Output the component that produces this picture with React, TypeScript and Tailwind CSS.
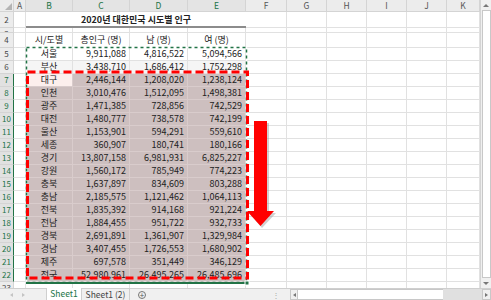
import React from 'react';

// column widths: rowhead, A, B, C, D, E, F..K
const COLS = 'grid grid-cols-[14px_12px_47px_57px_58px_58px_41px_40px_40px_40px_40px_33px]';
const GRID = 'border-r border-b border-[#e1e1e1]';

const rows: string[][] = [
    ['서울', '9,911,088', '4,816,522', '5,094,566'],
    ['부산', '3,438,710', '1,686,412', '1,752,298'],
    ['대구', '2,446,144', '1,208,020', '1,238,124'],
    ['인천', '3,010,476', '1,512,095', '1,498,381'],
    ['광주', '1,471,385', '728,856', '742,529'],
    ['대전', '1,480,777', '738,578', '742,199'],
    ['울산', '1,153,901', '594,291', '559,610'],
    ['세종', '360,907', '180,741', '180,166'],
    ['경기', '13,807,158', '6,981,931', '6,825,227'],
    ['강원', '1,560,172', '785,949', '774,223'],
    ['충북', '1,637,897', '834,609', '803,288'],
    ['충남', '2,185,575', '1,121,462', '1,064,113'],
    ['전북', '1,835,392', '914,168', '921,224'],
    ['전남', '1,884,455', '951,722', '932,733'],
    ['경북', '2,691,891', '1,361,907', '1,329,984'],
    ['경남', '3,407,455', '1,726,553', '1,680,902'],
    ['제주', '697,578', '351,449', '346,129'],
    ['전국', '52,980,961', '26,495,265', '26,485,696'],
];

const RowHead: React.FC<{ n: number; selected?: boolean }> = ({ n, selected }) => (
    <div
        className={`flex items-center justify-center overflow-hidden border-b text-[8px] ${
            selected
                ? 'bg-[#e1e1e1] text-[#217346] border-r-[1.5px] border-r-[#217346] border-b-[#d4d4d4]'
                : 'bg-[#ececec] text-[#444] border-r border-[#d4d4d4]'
        }`}
    >
        {n}
    </div>
);

const Empties = () => (
    <>
        {[0, 1, 2, 3, 4, 5].map(i => (
            <div key={i} className={GRID} />
        ))}
    </>
);

const HeaderRow = () => (
    <div className={`${COLS} h-[12px] bg-[#ececec] text-[8.5px] leading-[11px]`}>
        <div className="relative border-r border-b border-[#d4d4d4]">
            <div className="absolute right-[1px] bottom-[1px] w-0 h-0 border-l-[7px] border-l-transparent border-b-[7px] border-b-[#b4b4b4]" />
        </div>
        {['A', 'B', 'C', 'D', 'E', 'F', 'G', 'H', 'I', 'J', 'K'].map(c => {
            const sel = 'BCDE'.includes(c);
            return (
                <div
                    key={c}
                    className={`text-center border-r border-b border-[#d4d4d4] ${sel ? 'text-[#217346] bg-[#e4e4e4]' : 'text-[#555]'}`}
                >
                    {c}
                </div>
            );
        })}
    </div>
);

export default function App() {
    return (
        <div className="w-[491px] h-[300px] overflow-hidden bg-white font-['Noto_Sans_CJK_KR','Noto_Sans',sans-serif] text-[#222]">
            <div className="flex h-[288px]">
                <div className="relative w-[480px] h-[288px] overflow-hidden">
                    <HeaderRow />

                    {/* row 2: title */}
                    <div className={`${COLS} h-[16px]`}>
                        <RowHead n={2} />
                        <div className={GRID} />
                        <div className="col-span-4 flex items-center justify-center border-b-2 border-[#8c8c8c] text-[9px] font-bold leading-none">
                            2020년 대한민국 시도별 인구
                        </div>
                        <Empties />
                    </div>

                    {/* row 3: squeezed */}
                    <div className={`${COLS} h-[5px]`}>
                        <div className="overflow-hidden bg-[#ececec] border-r border-b border-[#d4d4d4] text-[8px] text-[#444] text-center leading-[12px]">3</div>
                        <div className={GRID} />
                        <div className={GRID} />
                        <div className={GRID} />
                        <div className={GRID} />
                        <div className={GRID} />
                        <Empties />
                    </div>

                    {/* row 4: column headings */}
                    <div className={`${COLS} h-[15px] text-[9px]`}>
                        <RowHead n={4} />
                        <div className={GRID} />
                        <div className={`${GRID} flex items-center justify-center`}>시/도별</div>
                        <div className={`${GRID} flex items-center justify-center`}>총인구 (명)</div>
                        <div className={`${GRID} flex items-center justify-center`}>남 (명)</div>
                        <div className={`${GRID} flex items-center justify-center`}>여 (명)</div>
                        <Empties />
                    </div>

                    {rows.map((r, i) => {
                        const n = i + 5;
                        const sel = n >= 7;
                        const cellBg = sel ? 'bg-[#cdbfbf] border-[#d9cccc]' : n === 6 ? 'bg-[#f5f5f5] border-[#e1e1e1]' : 'border-[#e1e1e1]';
                        return (
                            <div key={n} className={`${COLS} h-[13px] text-[9px] leading-[12px]`}>
                                <RowHead n={n} selected={sel} />
                                <div className={GRID} />
                                <div
                                    className={`border-r border-b text-center ${
                                        n === 7 ? 'bg-[#fcefed] border-[#d9cccc]' : cellBg
                                    }`}
                                >
                                    {r[0]}
                                </div>
                                {r.slice(1).map((v, j) => (
                                    <div key={j} className={`border-r border-b text-right pr-[3px] ${cellBg}`}>
                                        {v}
                                    </div>
                                ))}
                                <Empties />
                            </div>
                        );
                    })}

                    {/* row 23: cut off */}
                    <div className={`${COLS} h-[6px]`}>
                        <div className="overflow-hidden bg-[#ececec] border-r border-[#d4d4d4] text-[8px] text-[#444] text-center leading-[12px]">23</div>
                        <div className="border-r border-[#e1e1e1]" />
                        <div className="border-r border-[#e1e1e1]" />
                        <div className="border-r border-[#e1e1e1]" />
                        <div className="border-r border-[#e1e1e1]" />
                        <div className="border-r border-[#e1e1e1]" />
                        {[0, 1, 2, 3, 4, 5].map(k => (
                            <div key={k} className="border-r border-[#e1e1e1]" />
                        ))}
                    </div>

                    {/* copy marquee, red box, selection edge, arrow */}
                    <svg className="absolute left-0 top-0 pointer-events-none" width="480" height="288">
                        <rect x="26.5" y="47.5" width="220" height="235" fill="none" stroke="#ffffff" strokeWidth="1.5" />
                        <rect x="26.5" y="47.5" width="220" height="235" fill="none" stroke="#217346" strokeWidth="1.5" strokeDasharray="3 3" />
                        <rect x="27.5" y="72" width="220" height="206" fill="none" stroke="#ff0000" strokeWidth="3" strokeDasharray="8 4" />
                        <line x1="26" y1="283" x2="247" y2="283" stroke="#217346" strokeWidth="2" />
                        <rect x="245" y="281" width="4" height="4" fill="#217346" stroke="#ffffff" strokeWidth="1" />
                        <polygon points="256,123 269,123 269,213 276,213 262,228 249,213 256,213" fill="#9a9a9a" opacity="0.45" />
                        <polygon points="254,121 267,121 267,211 274,211 260.5,226 247,211 254,211" fill="#ff0000" />
                    </svg>
                </div>

                {/* vertical scrollbar */}
                <div className="w-[11px] h-[288px] bg-[#f0f0f0] border-l border-[#d4d4d4] flex flex-col items-center">
                    <div className="h-[10px] flex items-center justify-center">
                        <div className="w-0 h-0 border-l-[3px] border-l-transparent border-r-[3px] border-r-transparent border-b-[3px] border-b-[#777]" />
                    </div>
                    <div className="flex-1 w-[9px] bg-white border border-[#c8c8c8]" />
                    <div className="h-[10px] flex items-center justify-center">
                        <div className="w-0 h-0 border-l-[3px] border-l-transparent border-r-[3px] border-r-transparent border-t-[3px] border-t-[#777]" />
                    </div>
                </div>
            </div>

            {/* sheet tabs + horizontal scrollbar */}
            <div className="h-[12px] flex items-stretch bg-[#f0f0f0] border-t border-[#cfcfcf] text-[8.5px] leading-[11px]">
                <div className="w-[46px] flex items-center gap-[9px] pl-[10px]">
                    <div className="w-0 h-0 border-t-[2.5px] border-t-transparent border-b-[2.5px] border-b-transparent border-r-[3px] border-r-[#c4c4c4]" />
                    <div className="w-0 h-0 border-t-[2.5px] border-t-transparent border-b-[2.5px] border-b-transparent border-l-[3px] border-l-[#c4c4c4]" />
                </div>
                <div className="w-[36px] bg-white text-[#217346] text-center border-x border-[#cfcfcf] -mt-px">Sheet1</div>
                <div className="w-[48px] text-[#444] text-center border-r border-[#cfcfcf]">Sheet1 (2)</div>
                <div className="w-[24px] flex items-center justify-center">
                    <div className="w-[8px] h-[8px] rounded-full border border-[#777] text-[#555] text-[8px] leading-[6px] text-center">+</div>
                </div>
                <div className="w-[136px] flex items-center justify-end pr-[10px] text-[#aaa] text-[8px]">⋮</div>
                <div className="flex-1 flex items-stretch">
                    <div className="w-[8px] flex items-center justify-center border border-[#c8c8c8] bg-[#f0f0f0]">
                        <div className="w-0 h-0 border-t-[2.5px] border-t-transparent border-b-[2.5px] border-b-transparent border-r-[3px] border-r-[#777]" />
                    </div>
                    <div className="w-[145px] bg-white border-y border-[#c8c8c8]" />
                    <div className="flex-1 bg-[#e0e0e0]" />
                    <div className="w-[9px] flex items-center justify-center border border-[#c8c8c8] bg-[#f0f0f0]">
                        <div className="w-0 h-0 border-t-[2.5px] border-t-transparent border-b-[2.5px] border-b-transparent border-l-[3px] border-l-[#777]" />
                    </div>
                </div>
            </div>
        </div>
    );
}
